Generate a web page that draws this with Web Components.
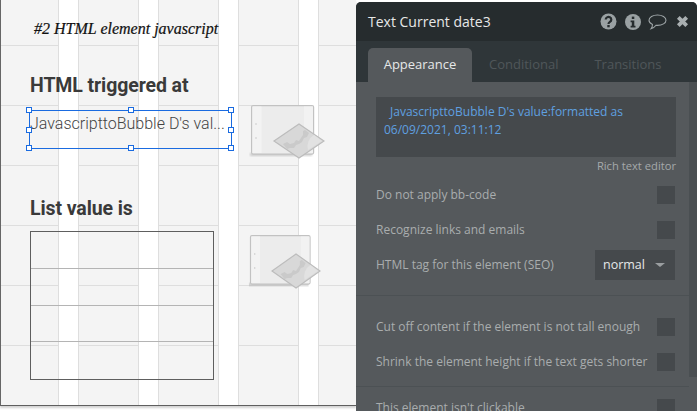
<!DOCTYPE html>
<html><head><meta charset="utf-8"><style>
html,body{margin:0;padding:0;background:#fff;overflow:hidden}
body{width:697px;height:411px}
</style></head><body>
<bubble-editor>
  <design-canvas>
    <canvas-title slot="items" style="left:33px;top:19px">#2 HTML element javascript</canvas-title>
    <canvas-heading slot="items" style="left:29px;top:74px">HTML triggered at</canvas-heading>
    <selected-text slot="items" style="left:28px;top:110px">JavascripttoBubble D's val...</selected-text>
    <plugin-placeholder slot="items" style="left:248px;top:103px"></plugin-placeholder>
    <canvas-heading slot="items" style="left:29px;top:197px">List value is</canvas-heading>
    <repeating-group slot="items" style="left:29px;top:231px"></repeating-group>
    <plugin-placeholder slot="items" small style="left:247px;top:233px"></plugin-placeholder>
  </design-canvas>
  <property-panel>
    <panel-header slot="header">Text Current date3</panel-header>
    <panel-tabs slot="tabs"></panel-tabs>
    <expression-box>
      <span style="padding-left:6px">JavascripttoBubble D's value:formatted as</span><br>06/09/2021, 03:11:12
    </expression-box>
    <check-row style="margin-top:13px">Do not apply bb-code</check-row>
    <check-row style="margin-top:17px">Recognize links and emails</check-row>
    <select-row style="margin-top:11px" value="normal">HTML tag for this element (SEO)</select-row>
    <panel-divider style="margin-top:15px"></panel-divider>
    <check-row style="margin-top:22px">Cut off content if the element is not tall enough</check-row>
    <check-row style="margin-top:17px">Shrink the element height if the text gets shorter</check-row>
    <panel-divider style="margin-top:15px"></panel-divider>
    <check-row style="margin-top:12px">This element isn't clickable</check-row>
  </property-panel>
</bubble-editor>
<script>
function def(name, css, html, init){
  customElements.define(name, class extends HTMLElement{
    constructor(){super();const r=this.attachShadow({mode:'open'});r.innerHTML='<style>'+css+'</style>'+html;}
    connectedCallback(){ if(init) init(this); }
  });
}
def('bubble-editor',`:host{display:flex;width:697px;height:411px;overflow:hidden;align-items:flex-start;background:#fff}`,`<slot></slot>`);
def('design-canvas',`:host{display:block;flex:none;width:356px;height:406px;box-sizing:border-box;position:relative;
  border-left:1px solid #666;border-bottom:1px solid #5f5f5f;box-shadow:0 2px 2px rgba(0,0,0,.18);
  background-color:#f4f4f4;
  background-image:
   linear-gradient(to right,transparent 57px,#dedede 57px,#dedede 58px,#fff 58px,#fff 77px,#dedede 77px,#dedede 78px,transparent 78px),
   linear-gradient(to bottom,transparent 45px,#dedede 45px,#dedede 46px,transparent 46px);
  background-size:80px 100%,100% 60px;background-position:0 0,0 0;background-repeat:repeat-x,repeat-y}
 ::slotted(*){position:absolute}`,`<slot name="items"></slot>`);
def('canvas-title',`:host{display:block;font:italic 16px/20px "Liberation Serif",serif;color:#111;white-space:nowrap;-webkit-text-stroke:.2px #111}`,`<slot></slot>`);
def('canvas-heading',`:host{display:block;font:700 19.5px/24px Roboto,sans-serif;color:#3a3a3a;white-space:nowrap;letter-spacing:-.1px}`,`<slot></slot>`);
def('selected-text',`:host{display:block;box-sizing:border-box;width:203px;height:39px;border:1px solid #1a6be0;font:300 16px/20px Roboto,sans-serif;color:#444;white-space:nowrap;letter-spacing:0}
 .t{padding:3px 0 0 0;display:block}
 i{position:absolute;width:4px;height:4px;border:1.5px solid #1a6be0;background:#fff}
`,`<span class="t"><slot></slot></span>
 <i style="left:-4px;top:-4px"></i><i style="left:98px;top:-4px"></i><i style="left:198px;top:-4px"></i>
 <i style="left:-4px;top:16px"></i><i style="left:198px;top:16px"></i>
 <i style="left:-4px;top:34px"></i><i style="left:98px;top:34px"></i><i style="left:198px;top:34px"></i>`);
def('plugin-placeholder',`:host{display:block;width:76px;height:60px}:host([small]){width:73px}svg{display:block;width:100%;height:100%}`,
`<svg viewBox="0 0 76 60" preserveAspectRatio="none">
 <defs><filter id="b"><feGaussianBlur stdDeviation=".8"/></filter></defs>
 <rect x="1" y="50" width="62" height="3" fill="#999" opacity=".45" filter="url(#b)"/>
 <rect x="2.600" y="2.600" width="62" height="48.500" rx="1.500" fill="#ececec" stroke="#c2c2c2" stroke-width="1.200"/>
 <rect x="3.500" y="3.500" width="9" height="46.500" fill="#f3f3f3"/>
 <rect x="55" y="3.500" width="9" height="46.500" fill="#f2f2f2"/>
 <circle cx="7" cy="21" r=".8" fill="#c8c8c8"/><circle cx="7" cy="35" r=".8" fill="#c8c8c8"/>
 <polygon points="50,21 75,38 50,55 25,38" fill="#d8d8d8" stroke="#bcbcbc" stroke-width="1.200"/>
 <path d="M34,41 l4,-2 3,2 4,-1 2,-3 3,1 2,-3 2,-3 0,-4 2,-1 l4,3 -2,4 -3,1 -2,4 -3,2 -3,1 -2,3 -4,0 -3,1z" fill="#cacaca"/>
 <path d="M59,47 a13,13 0 0 1 6,-15 l8,6z" fill="#e2e2e2"/>
</svg>`);
def('repeating-group',`:host{display:grid;box-sizing:border-box;width:184px;height:149px;border:1px solid #5e5e5e;grid-template-rows:repeat(4,1fr)}
 div{border-bottom:1px solid #b4b4b4}div:last-child{border:0}`,`<div></div><div></div><div></div><div></div>`);
def('property-panel',`:host{display:grid;flex:none;width:341px;height:409px;margin-top:2px;background:#55595c;grid-template-rows:39px 41px 1fr;border-radius:5px 5px 0 0;overflow:hidden;position:relative;font:12px "Open Sans",sans-serif}
 .scroll{display:grid;grid-template-columns:1fr 8px;min-height:0;overflow:hidden}
 .body{padding:15px 14px 0 20px;min-width:0}
 .bar{background:#4a4f52;height:295px}`,
`<slot name="header"></slot><slot name="tabs"></slot><div class="scroll"><div class="body"><slot></slot></div><div class="bar"></div></div>`);
def('panel-header',`:host{display:flex;align-items:center;justify-content:space-between;background:#262c2e;padding:0 8px 0 12px;color:#e6e8e8;font:14px "Open Sans",sans-serif}
 .ic{display:flex;align-items:center;gap:8px}svg{display:block}`,
`<slot></slot><div class="ic">
 <svg width="17" height="17" viewBox="0 0 17 17"><circle cx="8.5" cy="8.5" r="8" fill="#9aa1a3"/><path d="M5.7 6.600a2.800 2.600 0 1 1 4.300 2.200c-1 .7-1.500 1-1.500 2.200" fill="none" stroke="#262c2e" stroke-width="2.200"/><rect x="7.300" y="12" width="2.400" height="2.300" fill="#262c2e"/></svg>
 <svg width="16" height="16" viewBox="0 0 16 16" style="margin-right:-1px"><circle cx="8" cy="8" r="8" fill="#9aa1a3"/><rect x="6.800" y="2.600" width="2.500" height="2.400" fill="#262c2e"/><path d="M5.600 6.500h3.700v5.200h1.200v1.800H5.600v-1.800h1.200V8.300H5.600z" fill="#262c2e"/></svg>
 <svg width="19" height="16" viewBox="0 0 19 16"><path d="M9.500 1C4.800 1 1 3.300 1 6.200c0 1.800 1.400 3.300 3.500 4.300C4.500 12 4 13.500 3 14.800c2-.5 3.800-1.800 5-3.500.5.1 1 .1 1.500.1 4.700 0 8.500-2.300 8.500-5.200S14.200 1 9.500 1z" fill="none" stroke="#9aa1a3" stroke-width="1.100"/></svg>
 <svg width="13" height="13" viewBox="0 0 13 13" style="margin-left:1px"><path d="M2.300 2.300l8.400 8.400M10.700 2.300l-8.400 8.400" stroke="#a9afb1" stroke-width="3.800" fill="none"/></svg>
 </div>`);
def('panel-tabs',`:host{display:flex;align-items:flex-end;background:#2f3639;padding:0 0 0 12px;font:13px "Open Sans",sans-serif;color:#4f5659}
 span{display:block;text-align:center;height:34px;line-height:33px}
 .a{width:104px;background:#55595c;color:#e6e8e8;border-radius:5px 5px 0 0}
 .b{margin-left:17px}.c{margin-left:36px}`,
`<span class="a">Appearance</span><span class="b">Conditional</span><span class="c">Transitions</span>`);
def('expression-box',`:host{display:block;position:relative;margin-right:-1px}
 .box{box-sizing:border-box;height:60px;background:#45494c;padding:6px 8px;color:#5fa0e0;font:12px/18px "Open Sans",sans-serif;white-space:nowrap}
 .h{display:block;text-align:right;font:11.200px/14px "Open Sans",sans-serif;color:#a5a9ab;margin-top:2px}`,
`<div class="box"><slot></slot></div><span class="h">Rich text editor</span>`);
def('check-row',`:host{display:flex;align-items:center;justify-content:space-between;height:18px;color:#a9adae;font:12px/18px "Open Sans",sans-serif;white-space:nowrap}
 i{display:block;width:18px;height:18px;background:#45494c}`,`<span><slot></slot></span><i></i>`);
def('select-row',`:host{display:flex;align-items:center;justify-content:space-between;height:30px;color:#a9adae;font:12px/18px "Open Sans",sans-serif;white-space:nowrap}
 .s{box-sizing:border-box;width:80px;height:30px;background:#45494c;color:#e6e8e8;display:flex;align-items:center;justify-content:space-between;padding:0 10px 0 8px;font-size:12.500px}
 b{width:0;height:0;border:5px solid transparent;border-top:4px solid #9a9ea0;border-bottom:0}`,`<span><slot></slot></span><div class="s"><span id="v"></span><b></b></div>`,
 el=>{el.shadowRoot.getElementById('v').textContent=el.getAttribute('value');});
def('panel-divider',`:host{display:block;height:1px;background:#4c5154;margin-left:-20px;margin-right:-14px}`,``);
</script>
</body></html>
